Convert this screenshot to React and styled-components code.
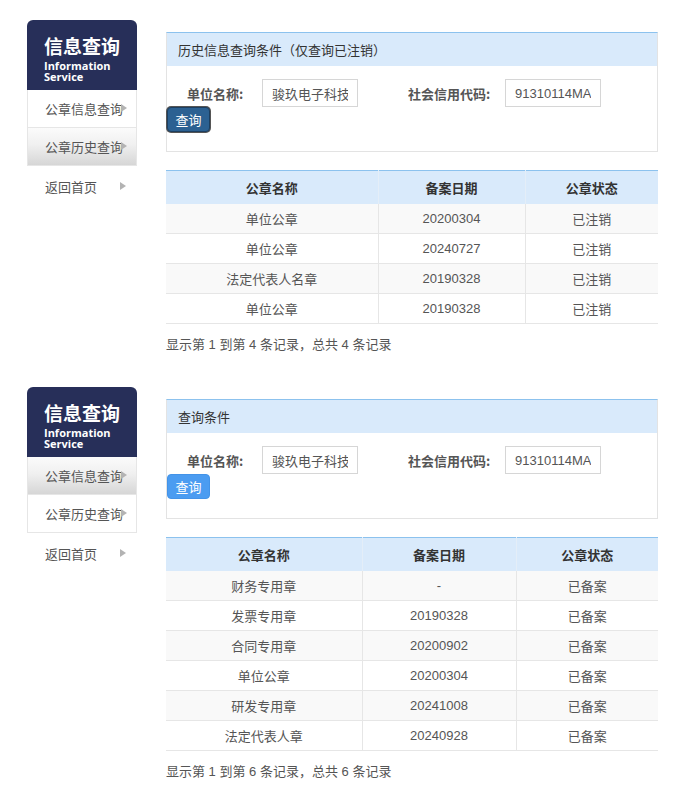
import React from "react";
import styled, { createGlobalStyle } from "styled-components";

const GlobalStyle = createGlobalStyle`
  body {
    margin: 0;
    background: #fff;
    font-family: "Liberation Sans", "Noto Sans CJK SC", sans-serif;
    color: #555;
  }
`;

const Page = styled.div`
  width: 692px;
  padding-top: 20px;
`;

const Section = styled.div`
  display: flex;
  align-items: flex-start;
  padding-left: 27px;
  margin-bottom: 33px;
`;

const Sidebar = styled.div`
  width: 110px;
  flex-shrink: 0;
`;

const SideHead = styled.div`
  height: 70px;
  box-sizing: border-box;
  background: #272f59;
  border-radius: 6px 6px 0 0;
  color: #fff;
  padding: 14px 0 0 17px;
`;

const SideTitle = styled.div`
  font-family: "Noto Sans CJK SC", sans-serif;
  font-size: 19px;
  font-weight: 700;
  line-height: 24px;
  margin-bottom: 2px;
`;

const SideSub = styled.div`
  width: 80px;
  font-family: "Open Sans", sans-serif;
  font-size: 11px;
  font-weight: 700;
  line-height: 11px;
`;

const MenuItem = styled.div`
  position: relative;
  height: 38px;
  box-sizing: border-box;
  line-height: 37px;
  padding-left: 17px;
  font-family: "Noto Sans CJK SC", sans-serif;
  font-size: 13px;
  color: #555;
  white-space: nowrap;
  border: 1px solid #e6e6e6;
  border-top: none;
  background: ${(p) =>
    p.$active ? "linear-gradient(#fbfbfb, #f0f0f0 45%, #d6d6d6)" : "#fff"};

  &::after {
    content: "";
    position: absolute;
    left: 93px;
    top: 14px;
    border-left: 6px solid #b3b3b3;
    border-top: 4.5px solid transparent;
    border-bottom: 4.5px solid transparent;
  }
`;

const HomeLink = styled(MenuItem)`
  border: none;
  background: transparent;
  margin-top: 2px;
  padding-left: 18px;
`;

const Main = styled.div`
  width: 492px;
  margin-left: 29px;
  margin-top: 12px;
`;

const Panel = styled.div`
  border: 1px solid #e3e3e3;
  border-top: 1px solid #8cc2ee;
`;

const PanelHead = styled.div`
  height: 33px;
  line-height: 33px;
  background: #d9eafb;
  padding-left: 11px;
  font-family: "Noto Sans CJK SC", sans-serif;
  font-size: 13px;
  color: #333;
`;

const PanelBody = styled.div`
  padding: 13px 0 19px;
`;

const FormRow = styled.div`
  display: flex;
  align-items: center;
  padding-left: 20px;
  height: 28px;
`;

const Label = styled.span`
  box-sizing: border-box;
  width: ${(p) => p.$width}px;
  padding-left: ${(p) => p.$gap || 0}px;
  font-family: "Noto Sans CJK SC", sans-serif;
  font-size: 13px;
  font-weight: 700;
  color: #555;
  white-space: nowrap;
`;

const Input = styled.input`
  width: 96px;
  height: 28px;
  box-sizing: border-box;
  border: 1px solid #d6d6d6;
  padding: 0 9px;
  font-family: "Liberation Sans", "Noto Sans CJK SC", sans-serif;
  font-size: 13px;
  color: #555;
  outline: none;
`;

const Button = styled.button`
  display: block;
  height: 25px;
  width: 43px;
  margin-left: 0;
  padding: 0;
  border-radius: 4px;
  font-family: "Noto Sans CJK SC", sans-serif;
  font-size: 13px;
  color: #fff;
  cursor: pointer;
  background: ${(p) => (p.$focused ? "#2c6192" : "#4b9cf1")};
  border: 1px solid ${(p) => (p.$focused ? "#1d3f60" : "#4393e8")};
  box-shadow: ${(p) => (p.$focused ? "0 0 0 1px #555" : "none")};
`;

const Table = styled.table`
  width: 100%;
  margin-top: 18px;
  border-collapse: collapse;
  border-top: 1px solid #8cc2ee;
  font-size: 13px;
  table-layout: fixed;
`;

const Th = styled.th`
  height: 33px;
  background: #d9eafb;
  color: #333;
  font-family: "Noto Sans CJK SC", sans-serif;
  font-weight: 700;
  border-left: 1px solid #e4eef8;
  padding: 0;
  &:first-child { border-left: none; }
`;

const Tr = styled.tr`
  background: ${(p) => (p.$odd ? "#f9f9f9" : "#fff")};
  border-bottom: 1px solid #e6e6e6;
`;

const Td = styled.td`
  height: 29px;
  padding: 0;
  text-align: center;
  color: #555;
  border-left: 1px solid #e6e6e6;
  &:first-child { border-left: none; }
`;

const Footer = styled.div`
  margin-top: 12px;
  line-height: 18px;
  font-size: 13px;
  color: #555;
`;

const sections = [
  {
    title: "历史信息查询条件（仅查询已注销）",
    active: 1,
    focused: true,
    cols: [212, 147, 133],
    rows: [
      ["单位公章", "20200304", "已注销"],
      ["单位公章", "20240727", "已注销"],
      ["法定代表人名章", "20190328", "已注销"],
      ["单位公章", "20190328", "已注销"],
    ],
  },
  {
    title: "查询条件",
    active: 0,
    focused: false,
    cols: [196, 154, 142],
    rows: [
      ["财务专用章", "-", "已备案"],
      ["发票专用章", "20190328", "已备案"],
      ["合同专用章", "20200902", "已备案"],
      ["单位公章", "20200304", "已备案"],
      ["研发专用章", "20241008", "已备案"],
      ["法定代表人章", "20240928", "已备案"],
    ],
  },
];

const menu = ["公章信息查询", "公章历史查询"];

const Block = ({ title, active, focused, cols, rows }) => (
  <Section>
    <Sidebar>
      <SideHead>
        <SideTitle>信息查询</SideTitle>
        <SideSub>Information Service</SideSub>
      </SideHead>
      {menu.map((m, i) => (
        <MenuItem key={m} $active={i === active}>
          {m}
        </MenuItem>
      ))}
      <HomeLink>返回首页</HomeLink>
    </Sidebar>
    <Main>
      <Panel>
        <PanelHead>{title}</PanelHead>
        <PanelBody>
          <FormRow>
            <Label $width={75}>单位名称:</Label>
            <Input readOnly value="骏玖电子科技（上海）有限公司" />
            <Label $width={147} $gap={50}>社会信用代码:</Label>
            <Input readOnly value="91310114MA1C8X2K7P" />
          </FormRow>
          <Button $focused={focused}>查询</Button>
        </PanelBody>
      </Panel>
      <Table>
        <colgroup>
          {cols.map((w, i) => (
            <col key={i} style={{ width: w }} />
          ))}
        </colgroup>
        <thead>
          <tr>
            <Th>公章名称</Th>
            <Th>备案日期</Th>
            <Th>公章状态</Th>
          </tr>
        </thead>
        <tbody>
          {rows.map((r, i) => (
            <Tr key={i} $odd={i % 2 === 0}>
              {r.map((c, j) => (
                <Td key={j}>{c}</Td>
              ))}
            </Tr>
          ))}
        </tbody>
      </Table>
      <Footer>
        显示第 1 到第 {rows.length} 条记录，总共 {rows.length} 条记录
      </Footer>
    </Main>
  </Section>
);

export default function App() {
  return (
    <Page>
      <GlobalStyle />
      {sections.map((s, i) => (
        <Block key={i} {...s} />
      ))}
    </Page>
  );
}
